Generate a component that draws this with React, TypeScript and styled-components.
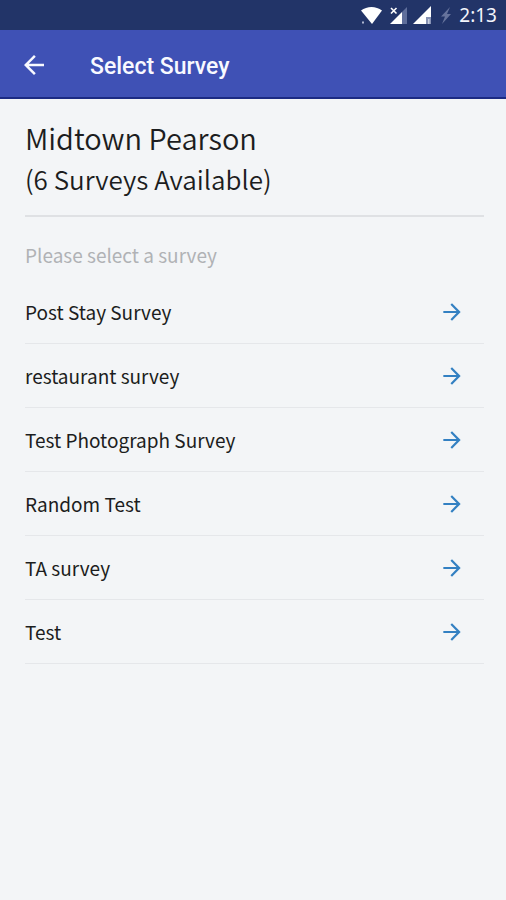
import React from 'react';
import styled, { createGlobalStyle } from 'styled-components';

const GlobalStyle = createGlobalStyle`
  *, *::before, *::after { box-sizing: border-box; }
  html, body, #root { height: 100%; }
  body {
    margin: 0;
    background: #f3f5f7;
    color: #1c1d20;
    font-family: 'Noto Sans CJK SC', 'Noto Sans', sans-serif;
  }
`;

const Screen = styled.div`
  display: flex;
  flex-direction: column;
  min-height: 100%;
`;

const StatusBar = styled.div`
  display: flex;
  align-items: center;
  justify-content: flex-end;
  height: 30px;
  padding-right: 9px;
  background: #223468;
  color: #f4f6fc;
  font: 400 19px/30px 'Noto Sans', sans-serif;
`;

const StatusIcons = styled.svg`
  display: block;
  margin-right: 4px;
`;

const AppBar = styled.header`
  display: flex;
  align-items: center;
  gap: 41px;
  height: 69px;
  padding: 3px 19px 0;
  background: #3f51b5;
  border-bottom: 2px solid #1c2b83;
  color: #f8f9ff;
`;

const BackButton = styled.button`
  display: flex;
  padding: 0;
  border: 0;
  background: none;
  color: inherit;
  cursor: pointer;
`;

const BarTitle = styled.h1`
  margin: 0;
  padding-top: 4px;
  font: 500 23px/32px Roboto, sans-serif;
`;

const Content = styled.main`
  padding: 17px 22px 0 25px;
`;

const Venue = styled.div`
  padding-bottom: 15px;
  border-bottom: 2px solid #dfe1e4;
`;

const VenueName = styled.h2`
  margin: 0;
  font-size: 29px;
  font-weight: 350;
  line-height: 42px;
`;

const VenueCount = styled.p`
  margin: 0;
  font-size: 26px;
  font-weight: 350;
  line-height: 42px;
`;

const Prompt = styled.p`
  margin: 0;
  padding: 21px 0 8px;
  color: #b0b2b5;
  font-size: 19px;
  line-height: 34px;
`;

const SurveyList = styled.ul`
  margin: 0;
  padding: 0;
  list-style: none;
`;

const SurveyItem = styled.li`
  border-bottom: 1px solid #e5e7ea;
`;

const SurveyButton = styled.button`
  display: flex;
  align-items: center;
  justify-content: space-between;
  width: 100%;
  height: 63px;
  padding: 0 19px 0 0;
  border: 0;
  background: none;
  color: inherit;
  font: inherit;
  font-size: 19px;
  text-align: left;
  cursor: pointer;

  svg { color: #3380c2; }
`;

const surveys = [
  'Post Stay Survey',
  'restaurant survey',
  'Test Photograph Survey',
  'Random Test',
  'TA survey',
  'Test',
];

function Arrow({ size, back = false }: { size: number; back?: boolean }) {
  return (
    <svg width={size} height={size} viewBox="0 0 24 24" fill="currentColor" aria-hidden="true">
      <path
        d={
          back
            ? 'M20 11H7.83l5.59-5.59L12 4l-8 8 8 8 1.41-1.41L7.83 13H20v-2z'
            : 'M12 4l-1.41 1.41L16.17 11H4v2h12.17l-5.58 5.59L12 20l8-8z'
        }
      />
    </svg>
  );
}

export default function App() {
  return (
    <Screen>
      <GlobalStyle />
      <StatusBar>
        <StatusIcons width="94" height="30" viewBox="0 0 94 30" aria-hidden="true">
          <path d="M0 10.5C6 5.8 15 5.8 21 10.5L11 24z" fill="#fff" />
          <path d="M1 21.500h2v2h-2z" fill="#aeb6d0" />
          <path d="M46 7V24H41V12z" fill="#5f6e9b" />
          <path d="M41 12V24H29z" fill="#fff" />
          <path d="M30 8l5.500 5.500M35.500 8l-5.500 5.500" stroke="#fff" strokeWidth="1.6" />
          <path d="M70 6V24H52z" fill="#fff" />
          <path d="M65 17H70V24H65z" fill="#8792b4" />
          <path d="M67 19H68.500V24H67z" fill="#c9cfe0" />
          <path d="M89 7l-9 9.500h4L81 24l9-10h-4z" fill="#66739c" />
        </StatusIcons>
        <time>2:13</time>
      </StatusBar>
      <AppBar>
        <BackButton type="button" aria-label="Back">
          <Arrow size={30} back />
        </BackButton>
        <BarTitle>Select Survey</BarTitle>
      </AppBar>
      <Content>
        <Venue>
          <VenueName>Midtown Pearson</VenueName>
          <VenueCount>(6 Surveys Available)</VenueCount>
        </Venue>
        <Prompt>Please select a survey</Prompt>
        <SurveyList>
          {surveys.map((name) => (
            <SurveyItem key={name}>
              <SurveyButton type="button">
                {name}
                <Arrow size={26} />
              </SurveyButton>
            </SurveyItem>
          ))}
        </SurveyList>
      </Content>
    </Screen>
  );
}
